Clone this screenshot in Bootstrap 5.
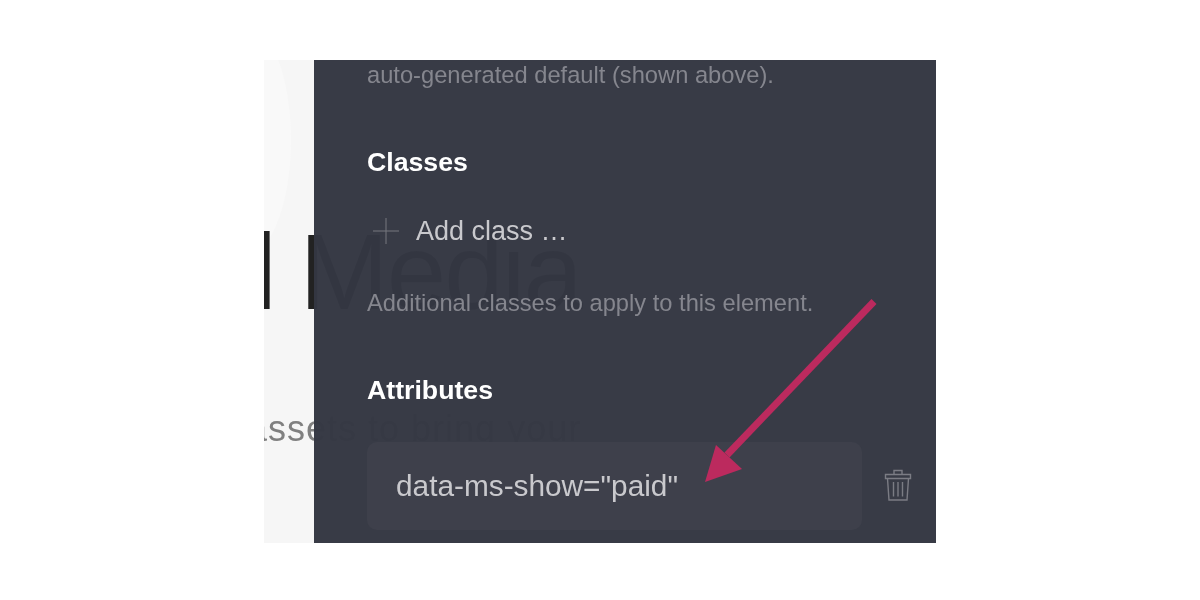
<!DOCTYPE html>
<html lang="en">
<head>
<meta charset="utf-8">
<title>Attributes</title>
<link rel="stylesheet" href="https://cdn.jsdelivr.net/npm/bootstrap@5.3.0/dist/css/bootstrap.min.css">
<style>
html,body{height:100%;background:#fff;font-family:"Liberation Sans",Arial,sans-serif;}
.stage{width:1200px;height:600px;padding-top:60px;}
.shot{width:672px;height:483px;background:#f6f6f6;overflow:hidden;filter:blur(.55px);}
.orb{position:absolute;left:-73px;top:-40px;width:100px;height:240px;border-radius:50%;background:#f9f9f9;box-shadow:-120px 0 0 60px #f9f9f9;}
.ghost-head{position:absolute;left:-11px;top:162px;font-size:107px;line-height:100px;letter-spacing:-2px;word-spacing:-3px;color:#222;white-space:nowrap;}
.ghost-sub{position:absolute;left:-17px;top:349px;font-size:36px;line-height:40px;letter-spacing:1px;color:#808080;white-space:nowrap;}
.lite{width:50px;flex:none;}
.darkpane{flex:1;background:rgba(52,55,66,.98);padding:0 24px 0 53px;position:relative;}
.hint{color:#85868e;font-size:23.7px;line-height:30px;}
.sect{color:#fff;font-weight:700;font-size:26.7px;line-height:30px;margin:0;}
.sect1{margin-top:57px;}
.sect2{margin-top:57px;}
.addrow{margin-top:39px;margin-bottom:42px;height:30px;gap:13px;color:#c9c9cd;font-size:27px;line-height:30px;}
.fieldbox{background:#3e404b;border-radius:10px;height:88px;width:495px;padding-left:29px;color:#c9c9cd;font-size:29.8px;margin-top:37px;flex:none;}
.fieldrow{gap:22px;}
.trash{margin-top:64px;}
.pointer{position:absolute;left:0;top:0;width:672px;height:483px;pointer-events:none;}
</style>
</head>
<body>
<div class="stage d-flex justify-content-center align-items-start">
  <div class="shot position-relative d-flex">
    <div class="orb"></div>
    <div class="ghost-head">l Media</div>
    <div class="ghost-sub">assets to bring your</div>
    <div class="lite"></div>
    <div class="darkpane d-flex flex-column">
      <div class="hint">auto-generated default (shown above).</div>
      <h3 class="sect sect1">Classes</h3>
      <div class="addrow d-flex align-items-center">
        <svg width="36" height="36" viewBox="0 0 36 36" aria-hidden="true"><path d="M6 18H32M19 5V31" stroke="#77787f" stroke-width="1" fill="none"/></svg>
        <span>Add class …</span>
      </div>
      <div class="hint">Additional classes to apply to this element.</div>
      <h3 class="sect sect2">Attributes</h3>
      <div class="fieldrow d-flex align-items-start">
        <div class="fieldbox d-flex align-items-center">data-ms-show="paid"</div>
        <svg class="trash" width="28" height="33" viewBox="0 0 28 33" aria-hidden="true"><g fill="none" stroke="#7b7c84" stroke-width="1.4"><path d="M1.5 5.5H26.5V9.5H1.5Z"/><path d="M3.5 9.5L5 31H23L24.5 9.5"/><path d="M10 5.5V1.5H18V5.5"/><path d="M9.5 13V27.5M14 13V27.5M18.5 13V27.5"/></g></svg>
      </div>
    </div>
    <svg class="pointer" viewBox="0 0 672 483" aria-hidden="true"><path d="M610 241.5L463 395" stroke="#bc2a5e" stroke-width="7" fill="none"/><path d="M441 422L452 385L478 409Z" fill="#bc2a5e"/></svg>
  </div>
</div>
<script src="https://cdn.jsdelivr.net/npm/bootstrap@5.3.0/dist/js/bootstrap.bundle.min.js"></script>
</body>
</html>
